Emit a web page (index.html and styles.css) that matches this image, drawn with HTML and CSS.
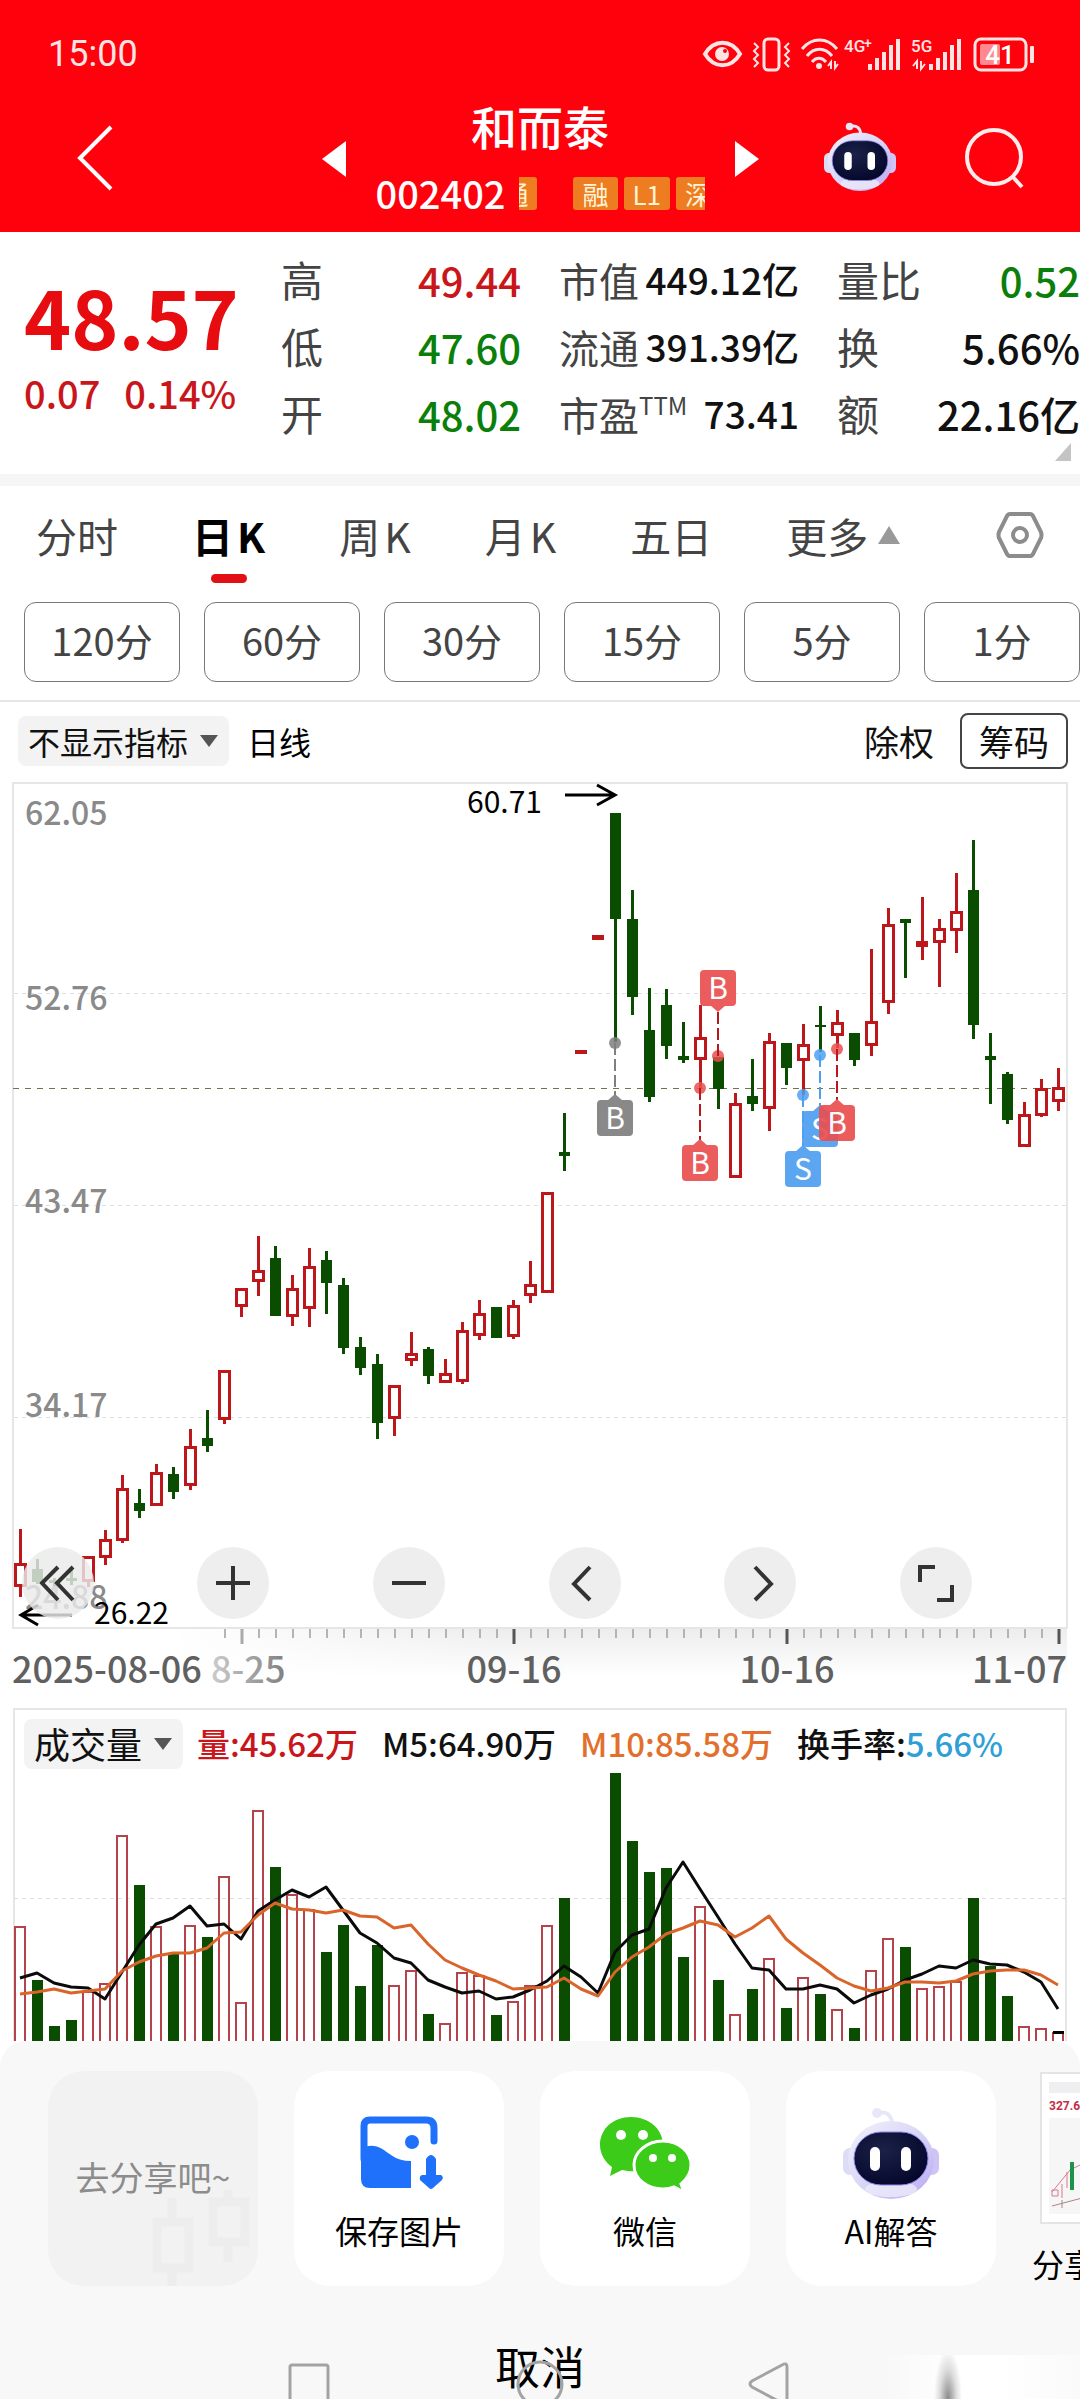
FILE: index.html
```html
<!DOCTYPE html>
<html lang="zh-CN">
<head>
<meta charset="utf-8">
<meta name="viewport" content="width=device-width, initial-scale=1">
<title>和而泰 002402</title>
<link rel="stylesheet" href="styles.css">
</head>
<body>
<svg class="defs" aria-hidden="true">
  <defs>
    <linearGradient id="shell" x1="0" y1="0" x2="1" y2="1">
      <stop offset="0" stop-color="#f4f2fb"/><stop offset="0.5" stop-color="#d8d6f6"/><stop offset="1" stop-color="#b9a6f2"/>
    </linearGradient>
    <radialGradient id="visor" cx="0.4" cy="0.35" r="0.7">
      <stop offset="0" stop-color="#1b2148"/><stop offset="1" stop-color="#04072a"/>
    </radialGradient>
    <symbol id="robot" viewBox="0 0 96 92">
      <path d="M35 6C44 4 48 8 49 16" fill="none" stroke="#e9e6f8" stroke-width="4"/>
      <circle cx="34" cy="6" r="5" fill="#e9e6f8"/>
      <rect x="0" y="41" width="14" height="27" rx="7" fill="#dddcf6"/>
      <rect x="82" y="41" width="14" height="27" rx="7" fill="#cfc4f4"/>
      <ellipse cx="48" cy="53" rx="43" ry="39" fill="url(#shell)"/>
      <ellipse cx="48" cy="82" rx="26" ry="8" fill="#ecebfa" opacity="0.8"/>
      <rect x="11" y="25" width="74" height="53" rx="27" fill="url(#visor)" stroke="#8f86ee" stroke-width="1"/>
      <rect x="27" y="40" width="10" height="24" rx="5" fill="#fff"/>
      <rect x="58" y="40" width="10" height="24" rx="5" fill="#fff"/>
    </symbol>
  </defs>
</svg>

<header class="top">
  <div class="status">
    <span class="clock">15:00</span>
    <svg class="status-icons" viewBox="0 0 340 40" fill="none" stroke="#ffe4e4" stroke-width="3" aria-hidden="true">
      <path d="M5 19C14 4 31 4 40 19C31 34 14 34 5 19Z" stroke-width="4"/>
      <circle cx="22" cy="19" r="7" fill="#ffe4e4" stroke="none"/>
      <circle cx="25" cy="16" r="2" fill="#ff000d" stroke="none"/>
      <rect x="64" y="4" width="15" height="31" rx="4"/>
      <path d="M54 8l4 4-4 4 4 4-4 4 4 4-4 4M89 8l-4 4 4 4-4 4 4 4-4 4 4 4" stroke-width="2"/>
      <path d="M102 14C112 2 127 2 137 14M107 21C114 12 125 12 132 21M112 27C116 22 122 22 126 27" stroke-width="3"/>
      <circle cx="119" cy="31" r="3" fill="#ffe4e4" stroke="none"/>
      <path d="M131 34V27l-3 4M135 26v7l3-4" stroke-width="2"/>
      <g fill="#ffe4e4" stroke="none">
        <text class="net" x="144" y="17">4G</text><text class="net plus" x="164" y="13">+</text>
        <path d="M168 29h4v6h-4zM175 23h4v12h-4zM182 17h4v18h-4zM189 10h4v25h-4zM196 4h4v31h-4z"/>
        <text class="net" x="211" y="17">5G</text>
        <path d="M229 29h4v6h-4zM236 23h4v12h-4zM243 17h4v18h-4zM250 10h4v25h-4zM257 4h4v31h-4z"/>
        <rect x="280" y="9" width="20" height="21" rx="2" opacity="0.6"/>
        <rect x="330" y="11" width="4" height="17" rx="1"/>
        <text class="charge" x="300" y="29">41</text>
      </g>
      <path d="M217 34V26l-4 5M221 26v8l4-5" stroke-width="2"/>
      <rect x="275" y="4" width="51" height="31" rx="6"/>
    </svg>
  </div>
  <div class="titlebar">
    <button class="icon-btn back" aria-label="返回"><svg width="36" height="66" viewBox="0 0 36 66"><path d="M34 2L3 33L34 64" fill="none" stroke="#fff" stroke-width="4"/></svg></button>
    <div class="switcher">
      <button class="icon-btn" aria-label="上一只"><svg width="24" height="36" viewBox="0 0 24 36"><path d="M24 0V36L0 18Z" fill="#fff"/></svg></button>
      <div class="stock">
        <h1 class="stock-name">和而泰</h1>
        <div class="stock-sub">
          <span class="stock-code">002402</span>
          <div class="tags"><span class="tag tag-cut">通</span><span class="tag">融</span><span class="tag">L1</span><span class="tag">深</span></div>
        </div>
      </div>
      <button class="icon-btn" aria-label="下一只"><svg width="24" height="36" viewBox="0 0 24 36"><path d="M0 0V36L24 18Z" fill="#fff"/></svg></button>
    </div>
    <div class="tools">
      <button class="icon-btn" aria-label="AI助手"><svg width="72" height="69"><use href="#robot"/></svg></button>
      <button class="icon-btn" aria-label="搜索"><svg width="61" height="63" viewBox="0 0 61 63" fill="none" stroke="#ffecec" stroke-width="4"><circle cx="30" cy="31" r="27"/><path d="M48 50L58 61"/></svg></button>
    </div>
  </div>
</header>

<main>
  <section class="quote">
    <div class="last">
      <strong class="price">48.57</strong>
      <div class="change"><span>0.07</span><span>0.14%</span></div>
    </div>
    <dl class="stats">
      <div><dt>高</dt><dd class="up">49.44</dd></div>
      <div><dt>低</dt><dd class="down">47.60</dd></div>
      <div><dt>开</dt><dd class="down">48.02</dd></div>
    </dl>
    <dl class="stats compact">
      <div><dt>市值</dt><dd>449.12亿</dd></div>
      <div><dt>流通</dt><dd>391.39亿</dd></div>
      <div><dt>市盈<sup>TTM</sup></dt><dd>73.41</dd></div>
    </dl>
    <dl class="stats">
      <div><dt>量比</dt><dd class="down">0.52</dd></div>
      <div><dt>换</dt><dd>5.66%</dd></div>
      <div><dt>额</dt><dd>22.16亿</dd></div>
    </dl>
    <svg class="corner" width="16" height="18" viewBox="0 0 16 18" aria-hidden="true"><path d="M16 0V18H0Z" fill="#c4c4c4"/></svg>
  </section>

  <nav class="periods">
    <button class="period">分时</button>
    <button class="period active">日<span>K</span></button>
    <button class="period">周<span>K</span></button>
    <button class="period">月<span>K</span></button>
    <button class="period">五日</button>
    <button class="period more">更多<svg width="22" height="18" viewBox="0 0 22 18"><path d="M11 0L22 18H0Z" fill="#999"/></svg></button>
    <button class="icon-btn settings" aria-label="设置"><svg width="48" height="46" viewBox="0 0 48 46" fill="none" stroke="#8c8c8c" stroke-width="4"><path d="M14 2H34Q36 2 37 4L45 20Q46 23 45 26L37 42Q36 44 34 44H14Q12 44 11 42L3 26Q2 23 3 20L11 4Q12 2 14 2Z"/><circle cx="24" cy="23" r="7"/></svg></button>
  </nav>
  <div class="minutes">
    <button class="minute">120分</button>
    <button class="minute">60分</button>
    <button class="minute">30分</button>
    <button class="minute">15分</button>
    <button class="minute">5分</button>
    <button class="minute">1分</button>
  </div>

  <div class="indicator">
    <label class="picker">
      <select class="picker-select" aria-label="指标"><option>不显示指标</option></select>
      <svg class="picker-arrow" width="18" height="12" viewBox="0 0 18 12"><path d="M0 0H18L9 12Z" fill="#555"/></svg>
    </label>
    <span class="line-name">日线</span>
    <button class="adjust">除权</button>
    <button class="chips">筹码</button>
  </div>

  <section class="kline">
    <svg class="plot" viewBox="0 0 1080 928" role="img" aria-label="日K线图">
      <defs>
        <linearGradient id="axisShade" x1="0" y1="0" x2="0" y2="1"><stop offset="0" stop-color="#ededed"/><stop offset="1" stop-color="#fff"/></linearGradient>
        <linearGradient id="axisFade" x1="0" y1="0" x2="1" y2="0"><stop offset="0" stop-color="#fff"/><stop offset="1" stop-color="#fff" stop-opacity="0"/></linearGradient>
        <linearGradient id="dateFade" x1="0" y1="0" x2="1" y2="0"><stop offset="0" stop-color="#ccc"/><stop offset="1" stop-color="#808080"/></linearGradient>
      </defs>
      <rect x="170" y="849" width="897" height="48" fill="url(#axisShade)"/>
      <rect x="170" y="849" width="330" height="50" fill="url(#axisFade)"/>
      <rect x="13" y="3" width="1054" height="845" fill="#fff" stroke="#e6e6e6" stroke-width="2"/>
      <path class="grid" d="M14 213H1066M14 425H1066M14 637H1066"/>
      <path class="last-line" d="M13 308H1066"/>
      <g class="scale">
        <text x="25" y="45">62.05</text>
        <text x="25" y="230">52.76</text>
        <text x="25" y="433">43.47</text>
        <text x="25" y="637">34.17</text>
        <text x="25" y="829">24.88</text>
      </g>
      <g id="candles" class="crisp"></g>
      <g class="extreme">
        <path d="M565 15H615M597 5L615 15L597 25"/>
        <path d="M72 835H22M38 825L21 835L38 845"/>
        <text x="467" y="33">60.71</text>
        <text x="94" y="844">26.22</text>
      </g>
      <g id="markers"></g>
      <g id="ticks"></g>
      <g class="dates">
        <text x="12" y="903">2025-08-06</text>
        <text x="211" y="903" fill="url(#dateFade)">8-25</text>
        <text x="514" y="903" text-anchor="middle">09-16</text>
        <text x="787" y="903" text-anchor="middle">10-16</text>
        <text x="1067" y="903" text-anchor="end">11-07</text>
      </g>
    </svg>
    <div class="controls">
      <button class="control" aria-label="最早"><svg viewBox="0 0 72 72"><path d="M36 20L20 36L36 53M51 20L35 36L51 53"/></svg></button>
      <button class="control" aria-label="放大"><svg viewBox="0 0 72 72"><path d="M19 36H53M36 19V53"/></svg></button>
      <button class="control" aria-label="缩小"><svg viewBox="0 0 72 72"><path d="M19 36H53"/></svg></button>
      <button class="control" aria-label="左移"><svg viewBox="0 0 72 72"><path d="M41 20L25 37L41 53"/></svg></button>
      <button class="control" aria-label="右移"><svg viewBox="0 0 72 72"><path d="M31 20L47 37L31 53"/></svg></button>
      <button class="control" aria-label="全屏"><svg viewBox="0 0 72 72"><path d="M20 35V20H35M52 38V53H37"/></svg></button>
    </div>
  </section>

  <section class="volume">
    <div class="volume-head">
      <label class="picker">
        <select class="picker-select" aria-label="副图指标"><option>成交量</option></select>
        <svg class="picker-arrow" width="18" height="12" viewBox="0 0 18 12"><path d="M0 0H18L9 12Z" fill="#555"/></svg>
      </label>
      <span class="vol-now">量:45.62万</span>
      <span>M5:64.90万</span>
      <span class="vol-m10">M10:85.58万</span>
      <span>换手率:<span class="vol-rate">5.66%</span></span>
    </div>
    <svg class="plot" viewBox="0 0 1080 272" role="img" aria-label="成交量图">
      <path class="grid" d="M14 129H1066"/>
      <g id="bars" class="crisp"></g>
      <path id="ma5" class="ma ma5"/>
      <path id="ma10" class="ma ma10"/>
    </svg>
  </section>
</main>

<section class="sheet">
  <div class="targets">
    <div class="target hint">
      <svg class="hint-art" viewBox="0 0 100 96" fill="none" stroke="#ededed" stroke-width="9" aria-hidden="true"><path d="M22 8V30M22 78V96M78 0V14M78 52V72"/><rect x="7" y="32" width="32" height="46"/><rect x="63" y="12" width="32" height="40"/></svg>
      <span class="hint-text">去分享吧~</span>
    </div>
    <button class="target">
      <svg width="96" height="92" viewBox="0 0 96 92"><path d="M13 52V19Q13 13 19 13H75Q83 13 83 21V34" fill="none" stroke="#1f70fb" stroke-width="7" stroke-linecap="round"/><path d="M10 42C22 34 32 42 40 48Q48 54 60 54V81H19Q10 81 10 72Z" fill="#1f70fb"/><circle cx="61" cy="35" r="7" fill="#1f70fb"/><path d="M75 52Q80 44 85 52V68H90Q93 70 91 73L82 81Q80 83 78 81L69 73Q68 69 71 68H75Z" fill="#1f70fb"/></svg>
      保存图片
    </button>
    <button class="target">
      <svg width="96" height="92" viewBox="0 0 96 92"><path d="M34 10C16 10 3 22 3 38C3 47 8 55 15 60L13 69L25 63C51 69 66 54 66 38C66 22 52 10 34 10Z" fill="#3bcb18"/><path d="M66 34C50 34 37 45 37 58C37 72 50 82 66 82Q72 82 77 80L87 85L84 77C90 72 94 66 94 58C94 45 82 34 66 34Z" fill="#3bcb18" stroke="#fff" stroke-width="3"/><g fill="#fff"><circle cx="24" cy="28" r="5"/><circle cx="46" cy="28" r="5"/><circle cx="56" cy="51" r="4"/><circle cx="75" cy="51" r="4"/></g></svg>
      微信
    </button>
    <button class="target">
      <svg width="96" height="92"><use href="#robot"/></svg>
      AI解答
    </button>
    <button class="target long-image">
      <svg width="96" height="152" viewBox="0 0 96 152"><rect x="1" y="1" width="94" height="150" fill="#fff" stroke="#e4e4e4" stroke-width="2"/><rect x="9" y="10" width="78" height="11" fill="#efeff1"/><rect x="9" y="46" width="78" height="96" fill="#f6f6f6"/><text class="thumb-price" x="9" y="38">327.61</text><path d="M12 120L30 98L46 90M12 118h6v6h-6zM22 112v14M27 100v16" fill="none" stroke="#d9788c" stroke-width="1"/><path d="M12 134L46 125M22 128v8" fill="none" stroke="#a8848c" stroke-width="1"/><path d="M32 90V118" stroke="#1d9348" stroke-width="4"/></svg>
      分享长图
    </button>
  </div>
  <button class="cancel">取消</button>
  <div class="system-nav" aria-hidden="true">
    <svg class="system-icons" viewBox="0 0 1080 46" fill="none" stroke="#a3a3a3" stroke-width="3"><rect x="290" y="12" width="38" height="40" rx="2"/><circle cx="540" cy="31" r="22"/><path d="M787 14Q787 9 782 12L752 28Q748 31 752 34L782 50Q787 53 787 48Z"/></svg>
    <div class="smear"></div>
  </div>
</section>
<script src="chart.js"></script>
</body>
</html>
```
FILE: styles.css
```css
* { box-sizing: border-box; }
body {
  margin: 0;
  background: #fff;
  color: #111;
  font-family: "Noto Sans CJK SC", Roboto, sans-serif;
  font-size: 34px;
  line-height: 1.2;
  overflow-x: hidden;
}
button, select { font: inherit; color: inherit; border: 0; background: none; padding: 0; margin: 0; }
h1, dl, dd { margin: 0; }
svg { display: block; flex: none; }
.defs { position: absolute; width: 0; height: 0; }
.icon-btn { display: flex; }

/* header */
.top { background: #ff000d; color: #fff; height: 232px; padding-top: 33px; }
.status { display: flex; justify-content: space-between; align-items: center; height: 44px; padding: 0 40px 0 48px; }
.clock { font-family: Roboto, sans-serif; font-size: 36px; color: #ffe4e4; }
.status-icons { width: 340px; height: 40px; }
.net { font: 500 17px Roboto, sans-serif; }
.plus { font-size: 14px; }
.charge { font: 500 26px Roboto, sans-serif; text-anchor: middle; fill: #fff; }
.titlebar { display: grid; grid-template-columns: 1fr auto 1fr; padding: 20px 55px 0; height: 138px; }
.back { align-self: start; padding: 28px 0 0 22px; }
.switcher { display: flex; gap: 30px; }
.switcher .icon-btn { padding-top: 44px; }
.stock { width: 329px; display: flex; flex-direction: column; align-items: center; }
.stock-name { font-size: 46px; font-weight: 500; line-height: 56px; }
.stock-sub { display: flex; align-items: center; gap: 14px; width: 100%; height: 80px; line-height: 46px; }
.stock-code { font-size: 38px; font-weight: 500; }
.tags { display: flex; flex: 1; overflow: hidden; gap: 6px; }
.tag { flex: none; background: #ee7d22; color: #fff3d8; font-size: 26px; line-height: 33px; padding: 0 9px; border-radius: 3px; }
.tag-cut { margin-left: -26px; margin-right: 30px; }
.tools { display: flex; justify-content: flex-end; gap: 68px; padding-top: 25px; }
.tools .icon-btn { align-self: flex-start; }
.tools .icon-btn + .icon-btn { padding-top: 4px; }

/* quote */
.quote {
  position: relative;
  display: grid;
  grid-template-columns: 219fr 240fr 240fr 243fr;
  column-gap: 38px;
  padding: 14px 0 27px 24px;
  border-bottom: 12px solid #f6f6f6;
}
.last { padding-top: 21px; white-space: nowrap; }
.price { display: block; font-size: 80px; font-weight: 700; line-height: 96px; color: #e60c10; }
.change { display: flex; gap: 24px; font-size: 38px; font-weight: 500; line-height: 60px; color: #c9161b; }
.stats { font-size: 40px; }
.stats div { display: flex; justify-content: space-between; align-items: center; height: 67px; white-space: nowrap; }
.stats dt { color: #444; display: flex; font-size: 42px; }
.stats dd { font-weight: 500; }
.stats.compact { font-size: 37px; }
.stats.compact dt { font-size: 40px; }
sup { font-size: 24px; line-height: 30px; vertical-align: top; }
.up { color: #c9161b; }
.down { color: #0a800a; }
.corner { position: absolute; right: 9px; bottom: 13px; }

/* period tabs */
.periods { display: flex; gap: 74px; align-items: center; height: 98px; padding: 0 36px; }
.period { display: flex; gap: 4px; align-items: center; font-size: 41px; line-height: 60px; color: #444; white-space: nowrap; }
.active { position: relative; font-weight: 700; color: #000; }
.active::after { content: ""; position: absolute; left: 50%; bottom: -18px; width: 36px; height: 9px; margin-left: -18px; border-radius: 5px; background: #e01014; }
.more { gap: 10px; }
.settings { margin-left: auto; }
.minutes { display: grid; grid-template-columns: repeat(6, 1fr); gap: 24px; padding: 18px 0 18px 24px; border-bottom: 2px solid #e6e6e6; }
.minute { height: 80px; border: 1px solid #777; border-radius: 12px; font-size: 38px; line-height: 70px; padding-bottom: 4px; color: #444; }

/* indicator row */
.indicator { display: flex; align-items: center; height: 78px; padding: 0 12px 0 18px; }
.picker { position: relative; display: flex; align-items: center; height: 50px; background: #f3f3f3; border-radius: 8px; padding: 0 10px; }
.picker-select { appearance: none; height: 50px; padding-right: 30px; outline: 0; }
.picker-arrow { position: absolute; right: 11px; top: 19px; pointer-events: none; }
.indicator, .indicator .picker-select { font-size: 32px; color: #111; }
.line-name { margin-left: 18px; margin-right: auto; color: #000; }
.adjust { margin-right: 26px; font-size: 35px; }
.chips { width: 108px; height: 56px; border: 2px solid #444; border-radius: 8px; font-size: 35px; }

/* charts */
.kline { position: relative; }
.plot { width: 100%; height: auto; }
.plot text { font-family: "Noto Sans CJK SC", sans-serif; }
.crisp { shape-rendering: crispEdges; }
.grid { fill: none; stroke: #dedede; stroke-width: 1; stroke-dasharray: 4 4; shape-rendering: crispEdges; }
.last-line { stroke: #76704c; stroke-width: 1; stroke-dasharray: 6 6; shape-rendering: crispEdges; }
.scale { font-size: 32px; font-weight: 500; fill: #8a8a8a; }
.extreme { font-size: 30px; fill: #000; }
.extreme path { fill: none; stroke: #000; stroke-width: 3; }
.dates { font-size: 36px; font-weight: 500; fill: #606060; }
.wick-up { stroke: #bd171c; stroke-width: 3; }
.wick-down { stroke: #0a4d00; stroke-width: 3; }
.body-up { fill: #fff; stroke: #bd171c; stroke-width: 3; }
.body-flat { fill: #bd171c; }
.body-down { fill: #0a4d00; }
.bar-up { fill: none; stroke: #b5434c; stroke-width: 2; }
.flag { font-size: 30px; fill: #fff; text-anchor: middle; }
.controls { position: absolute; left: 2%; right: 10%; top: 767px; display: flex; justify-content: space-between; }
.control { width: 72px; height: 72px; border-radius: 50%; background: rgba(234, 234, 234, 0.82); }
.control svg { width: 72px; height: 72px; fill: none; stroke: #333; stroke-width: 4; }
.volume { margin: 0 13px; border: 2px solid #e6e6e6; border-bottom: 0; }
.volume .plot { width: calc(100% + 30px); margin-left: -15px; }
.volume-head { display: flex; align-items: center; height: 50px; margin: 9px 0 0 9px; font-size: 33px; font-weight: 500; white-space: nowrap; gap: 24px; }
.volume-head .picker { margin-right: -10px; }
.volume-head .picker-select { font-size: 36px; font-weight: 400; }
.vol-now { color: #c9161b; }
.vol-m10 { color: #e2702c; }
.vol-rate { color: #2f9fd6; }
.ma { fill: none; stroke-width: 3; stroke-linejoin: round; }
.ma5 { stroke: #0b0b0b; }
.ma10 { stroke: #d9652a; }

/* share sheet */
.sheet { position: relative; background: #f8f8f8; border-radius: 26px 26px 0 0; padding-top: 30px; height: 358px; overflow: hidden; }
.targets { display: flex; gap: 36px; padding-left: 48px; }
.target { flex: none; width: 210px; height: 215px; border-radius: 36px; background: #fff; display: flex; flex-direction: column; align-items: center; padding-top: 36px; font-size: 32px; line-height: 62px; color: #000; }
.hint { position: relative; background: #f2f2f2; color: #8c8c8c; font-size: 34px; padding-top: 75px; }
.hint-art { position: absolute; right: 8px; bottom: 0; width: 100px; height: 96px; }
.hint-text { position: relative; }
.long-image { background: none; padding: 1px 0 0; align-items: flex-start; line-height: 78px; }
.long-image svg { margin-left: 8px; }
.thumb-price { font: 700 12px Roboto, sans-serif; fill: #c03048; }
.cancel { display: block; margin: 50px auto 0; font-size: 45px; line-height: 60px; color: #000; }
.system-nav { position: absolute; left: 0; right: 0; bottom: 0; height: 46px; }
.system-icons { width: 100%; height: 46px; }
.smear { position: absolute; right: 0; bottom: 0; width: 200px; height: 44px; background: radial-gradient(ellipse 14px 50px at 68px 44px, #8a8a8a, rgba(160, 160, 160, 0.35) 60%, transparent), linear-gradient(90deg, transparent, #fff 40%, #fff 60%, rgba(255, 255, 255, 0.3)); }
```
FILE: chart.js
```js
const NS = "http://www.w3.org/2000/svg";
const xAt = i => Math.round(20.3 + i * 17.005);

function add(parent, tag, attrs, text) {
  const el = document.createElementNS(NS, tag);
  for (const k in attrs) el.setAttribute(k, attrs[k]);
  if (text) el.textContent = text;
  parent.appendChild(el);
  return el;
}

// direction, high, body top, body bottom, low
const candles = [
  ["r",749,783,807,817],["g",779,789,802,804],["g",798,800,803,806],["g",790,798,801,805],
  ["r",776,776,802,807],["r",750,759,778,785],["r",695,708,761,763],["g",709,723,731,738],
  ["r",684,692,726,726],["g",687,694,712,719],["r",649,666,706,710],["g",630,658,666,672],
  ["r",590,590,640,644],["r",508,508,527,537],["r",456,490,502,516],["g",466,478,536,536],
  ["r",495,508,537,546],["r",468,486,529,547],["g",471,480,503,534],["g",498,505,568,574],
  ["g",557,567,588,595],["g",574,584,643,659],["r",605,605,639,656],["r",552,573,581,586],
  ["g",567,569,596,604],["r",579,593,603,603],["r",542,550,602,604],["r",520,533,556,560],
  ["g",527,527,558,558],["r",520,525,557,559],["r",481,504,516,523],["r",412,412,513,513],
  ["g",333,372,376,391],["r",270,270,274,274],["r",155,155,160,160],["g",33,33,139,262],
  ["g",110,139,217,235],["g",208,250,317,322],["g",209,225,266,279],["g",242,276,280,283],
  ["r",225,257,280,308],["g",277,277,309,329],["r",313,323,398,398],["g",279,316,324,331],
  ["r",253,261,329,351],["g",263,263,288,305],["r",244,264,281,315],["g",226,245,247,272],
  ["r",230,242,256,268],["g",253,253,280,286],["r",169,241,266,276],["r",128,144,223,234],
  ["g",139,139,143,198],["r",117,161,167,180],["r",139,148,163,207],["r",93,131,151,173],
  ["g",60,110,245,259],["g",253,276,280,324],["g",292,294,340,344],["r",322,334,367,367],
  ["r",299,308,336,337],["r",288,307,322,331]
];
const candleLayer = document.getElementById("candles");
candles.forEach(([dir, high, top, bottom, low], i) => {
  const x = xAt(i);
  const up = dir === "r";
  if (low > high) add(candleLayer, "path", { class: up ? "wick-up" : "wick-down", d: `M${x} ${high}V${low}` });
  if (!up) add(candleLayer, "rect", { class: "body-down", x: x - 5, y: top, width: 11, height: bottom - top });
  else if (bottom - top < 8) add(candleLayer, "rect", { class: "body-flat", x: x - 6, y: top, width: 12, height: bottom - top });
  else add(candleLayer, "rect", { class: "body-up", x: x - 5, y: top + 1, width: 10, height: bottom - top - 3 });
});

// candle index, letter, colour, dot y, tag top, pointer side
const markers = [
  [35,"B","#7f7f7f",263,320,"top"],[40,"B","#ea4f50",308,365,"top"],[41,"B","#ea4f50",276,190,"bottom"],
  [47,"S","#4f9ff0",275,331,"top"],[46,"S","#4f9ff0",315,371,"top"],[48,"B","#ea4f50",269,325,"top"]
];
const markerLayer = document.getElementById("markers");
markers.forEach(([i, letter, color, dot, top, side]) => {
  const x = xAt(i);
  const line = color === "#ea4f50" ? "#b5191d" : color;
  add(markerLayer, "circle", { cx: x, cy: dot, r: 6, fill: color, opacity: 0.85 });
  add(markerLayer, "path", { d: side === "top" ? `M${x} ${dot}V${top - 5}` : `M${x} ${top + 42}V${dot}`, stroke: line, "stroke-width": 2, "stroke-dasharray": "12 4" });
  const tip = side === "top" ? `M${x - 8} ${top + 1}L${x} ${top - 6}L${x + 8} ${top + 1}Z` : `M${x - 8} ${top + 35}L${x} ${top + 42}L${x + 8} ${top + 35}Z`;
  const g = add(markerLayer, "g", { opacity: 0.92 });
  add(g, "path", { d: tip, fill: color });
  add(g, "rect", { x: x - 18, y: top, width: 36, height: 36, rx: 4, fill: color });
  add(g, "text", { class: "flag", x: x, y: top + 29 }, letter);
});

// trading-day ticks with a long one under every date
const tickLayer = document.getElementById("ticks");
for (let i = 12; i < 62; i++) {
  const major = (i - 13) % 16 === 0;
  add(tickLayer, "path", { d: `M${xAt(i) + 1} 849v${major ? 15 : 9}`, stroke: major ? (i < 20 ? "#aaa" : "#555") : "#b4b4b4", "stroke-width": major ? 3 : 2 });
}

// top edge of every volume bar, null for the two limit-up days
const bars = [237,291,337,331,302,294,146,196,237,265,236,248,187,313,121,178,205,220,263,236,297,256,296,281,325,334,283,286,326,312,296,236,209,null,null,84,152,183,179,268,217,291,325,300,269,319,288,305,320,339,281,249,258,299,297,292,209,277,307,337,339,343];
const OFFSET = 80, BASE = 272;
const barLayer = document.getElementById("bars");
bars.forEach((y, i) => {
  if (y === null) return;
  const x = xAt(i), t = y - OFFSET;
  if (candles[i][0] === "g") add(barLayer, "rect", { class: "body-down", x: x - 5, y: t, width: 11, height: BASE - t });
  else add(barLayer, "path", { class: "bar-up", d: `M${x - 5} ${BASE}V${t + 1}H${x + 5}V${BASE}` });
});
add(barLayer, "rect", { x: 1053, y: 262, width: 11, height: 3, fill: "#000" });

const ma5 = [289,284,294,298,299,310,283,256,235,229,217,237,235,250,222,211,201,208,198,221,244,254,269,274,291,298,304,302,310,308,301,292,277,288,304,263,246,240,199,173,200,228,255,279,281,300,300,296,300,314,306,300,291,285,277,279,271,275,276,283,293,320];
const ma10 = [305,303,300,304,302,300,282,273,267,264,264,259,244,243,226,214,220,221,224,221,227,228,239,236,255,271,279,286,292,300,299,298,289,300,307,283,268,258,245,239,232,236,248,239,227,250,264,276,289,297,302,299,293,293,294,292,285,282,281,281,286,296];
const toPath = ys => ys.map((y, i) => `${i ? "L" : "M"}${xAt(i)} ${y - OFFSET}`).join("");
document.getElementById("ma5").setAttribute("d", toPath(ma5));
document.getElementById("ma10").setAttribute("d", toPath(ma10));
```
